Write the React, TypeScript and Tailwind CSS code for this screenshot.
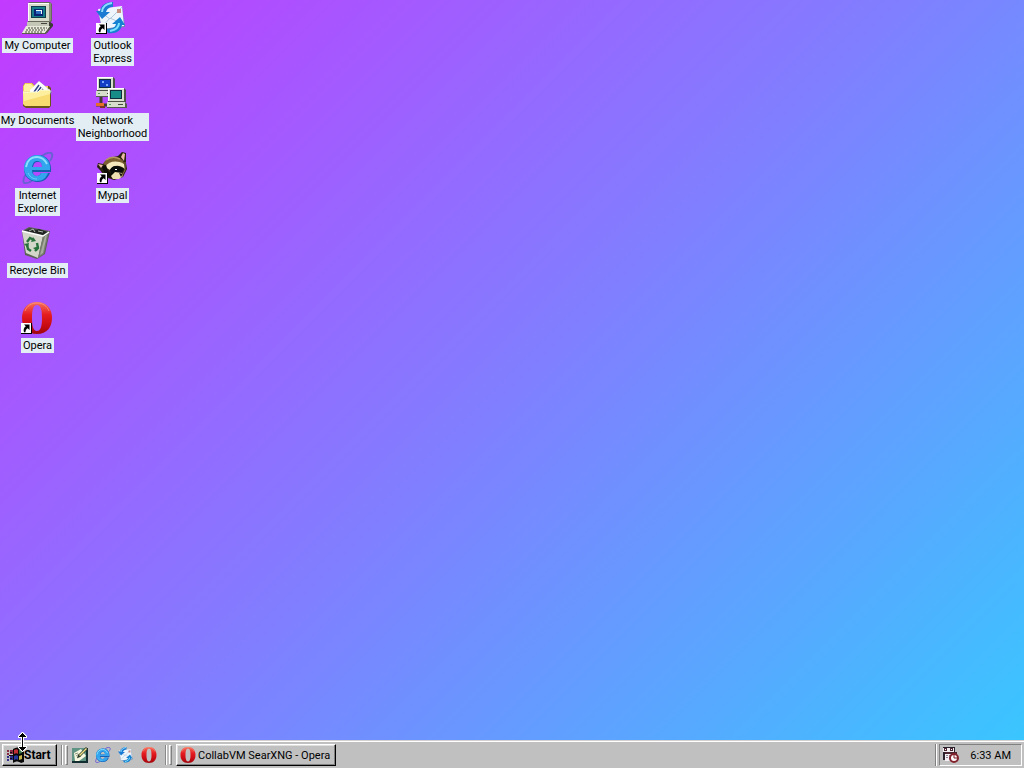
import type { ReactNode } from "react";

function ShortcutArrow() {
  return (
    <g>
      <path d="M0 21h11v11H0z" fill="#000" />
      <path d="M0 21h10v10H0z" fill="#fff" />
      <path d="M3 22.500h5.500v5.500l-1.800-1.800c-1.700 1-2.200 2-2.200 4H3c-.9-2.800 0-4.700 1.800-6z" fill="#000" />
    </g>
  );
}

function Svg32({ children }: { children: ReactNode }) {
  return (
    <svg viewBox="0 0 32 32" className="size-8 shrink-0" aria-hidden="true">
      {children}
    </svg>
  );
}

function ComputerIcon() {
  return (
    <Svg32>
      <path d="M6 1 8 0h20l2 2v17l-3 3H8l-2-2z" fill="#68685c" />
      <path d="M6 1h21v18H6z" fill="#d9dccb" />
      <path d="M6 1h21v1H7v17H6z" fill="#fff" />
      <path d="M27 1h2v17l-2 2z" fill="#8a8b7d" />
      <path d="M9 4h15v12H9z" fill="#113b4a" />
      <path d="M10 5h13v10H10z" fill="#187d8b" />
      <path d="M12 7h9v7h-9z" fill="#0b1f73" />
      <path d="M14 8h6v4h-6z" fill="#eef7fa" />
      <path d="M14 9h5v3h-5z" fill="#2668bd" />
      <path d="M5 20h23l3 2v2l-6 7h-5l6-8H5z" fill="#3c3c34" />
      <path d="M5 20h22v4H5z" fill="#c4c6b6" />
      <path d="M19 21h6v1h-6z" fill="#44443c" />
      <path d="M4 24h24l-5 7H0z" fill="#e9ead9" />
      <path d="M0 31h23l5-6v2l-4 5H0z" fill="#5c5c50" />
      <path d="M6 26h19M4 28h19M3 30h18" stroke="#46463e" strokeDasharray="2 1" fill="none" />
    </Svg32>
  );
}

function FolderIcon() {
  return (
    <Svg32>
      <path d="m1 9 2-3h7l3 3h14l2 2v18l-2 2H4l-3-2z" fill="#6b5518" />
      <path d="m1 9 2-3h7l3 3h13v8H1z" fill="#f0c95a" />
      <path d="m2 9 1-2h6l2 2v5H2z" fill="#fff2a0" />
      <path d="M8 14 17 4l13 11-4 6H8z" fill="#6c6f86" />
      <path d="M8 13 17 4l12 10-4 6H8z" fill="#fbfcff" />
      <path d="m12 15 5-7m-2 8 4-6m-1 7 3-5m0 6 2-4" stroke="#314486" strokeWidth="1.500" />
      <path d="m25 11 5 4-3 1z" fill="#b9bdcc" />
      <path d="M1 15h15l2-2h10v16H3l-2-2z" fill="#f8dc72" />
      <path d="M1 15h15l2-2h10v4L2 24z" fill="#fff6ad" opacity=".75" />
      <path d="M1 15h15l2-2h10" fill="none" stroke="#fffde0" />
    </Svg32>
  );
}

function ExplorerMark() {
  return (
    <g>
      <path d="M4 22c-4 6-3 10 0 9 2 0 4-1 7-3M20 4c5-4 9-4 10-2s0 4-2 7" fill="none" stroke="#6b5fd6" strokeWidth="2" />
      <path
        fillRule="evenodd"
        d="M16 3C8 3 2 9 2 17s6 13 14 13c6 0 10-4 12-9h-9c-1 2-2 3-4 3-3 0-4-2-4-4h18c1-10-4-17-13-17zm-5 12c1-4 2-5 5-5s4 1 4 5z"
        fill="#165fb4"
      />
      <path
        fillRule="evenodd"
        d="M15 3C8 3 2 9 2 16s5 13 13 13c6 0 9-3 11-8h-7c-1 3-3 3-5 3-3-1-4-3-4-6h18c1-8-4-15-13-15zm-5 12c1-4 2-6 5-6s5 2 5 6z"
        fill="#32a5ee"
      />
      <path d="M4 15c1-6 5-10 11-10 5 0 8 3 10 7" fill="none" stroke="#8be0ff" strokeWidth="2" />
      <path d="M6 21c2 4 5 6 9 6" fill="none" stroke="#6ad2fa" />
    </g>
  );
}

function RecycleIcon() {
  return (
    <Svg32>
      <path d="m1 4 7-4 21 4-5 23-8 5-12-4z" fill="#5d6156" />
      <path d="m2 4 7-3 19 4-6 5z" fill="#3f4543" />
      <path d="m5 4 6-2 2 2 5-2 8 3-4 3z" fill="#202522" />
      <path d="m8 4 4-2 2 3m3-1 5 1" fill="none" stroke="#b4bbb1" />
      <path d="m1 4 21 5-5 22-12-5z" fill="#d3d6c9" />
      <path d="m22 9 6-4-5 22-6 4z" fill="#777d6e" />
      <path d="m24 9 2-1-4 18-3 2z" fill="#a8ad9f" />
      <path d="m1 4 21 5 6-4" fill="none" stroke="#fff" strokeWidth="1.500" />
      <path d="m6 15 3-4 4 2m3 3 1 5-3 3m-4 0-3-2-1-4" fill="none" stroke="#28713c" strokeWidth="2.400" />
      <path d="m12 10 3 4-5 1zm6 9-2 5-4-3zM3 17l5-1-1 5z" fill="#28713c" />
    </Svg32>
  );
}

function OperaMark() {
  return (
    <g>
      <defs>
        <linearGradient id="opera-red" x2="0" y2="1">
          <stop stopColor="#f7725d" />
          <stop offset=".4" stopColor="#e51c20" />
          <stop offset=".75" stopColor="#c70a12" />
          <stop offset="1" stopColor="#9d080e" />
        </linearGradient>
      </defs>
      <path
        fillRule="evenodd"
        d="M16 0C6 0 1 7 1 16s5 16 15 16 15-7 15-16S26 0 16 0zm0 3c4 0 5 6 5 13s-1 13-5 13-5-6-5-13 1-13 5-13z"
        fill="url(#opera-red)"
      />
      <path d="M4 9C6 4 10 1 16 1s10 3 12 8" fill="none" stroke="#ff9e83" opacity=".7" />
    </g>
  );
}

function MailMark() {
  return (
    <g>
      <path d="m2 8 24-3 3 20-23 3z" fill="#6788ad" />
      <path d="m2 7 24-3 2 20-22 3z" fill="#eef5fc" />
      <path d="m6 25 8-9 13 6M3 9l11 8L26 5" fill="none" stroke="#b3c7dc" />
      <path d="M21 7h4v4h-4z" fill="#c98e7d" />
      <path d="M17 0C10 0 5 3 4 9H0l6 8 8-7h-4c1-3 3-5 7-5z" fill="#1b7bd2" />
      <path d="M16 1C10 2 6 5 6 10" fill="none" stroke="#8fdcff" strokeWidth="2" />
      <path d="m24 15 5 8h-3c-1 6-6 9-14 8l-2-4c6 0 9-1 10-5h-4z" fill="#1681d0" />
      <path d="M23 21c0 5-4 7-9 8" fill="none" stroke="#7be0ff" strokeWidth="2" />
    </g>
  );
}

function TinyComputer({ screen }: { screen: string }) {
  return (
    <g>
      <path d="M0 0h16l2 2v12H0z" fill="#4c5047" />
      <path d="M0 0h16v13H0z" fill="#d9dfce" />
      <path d="M0 0h16v1H1v12H0z" fill="#fff" />
      <path d="M2 2h12v9H2z" fill="#102d3d" />
      <path d="M3 3h10v7H3z" fill={screen} />
      <path d="M-1 14h18l2 2v4H-1z" fill="#555b4f" />
      <path d="M-1 14h18v5H-1z" fill="#d8decc" />
      <path d="M10 16h5v1h-5z" fill="#454b41" />
      <path d="M1 16h2v1H1z" fill="#54a05d" />
    </g>
  );
}

function NetworkIcon() {
  return (
    <Svg32>
      <g transform="translate(1 0)"><TinyComputer screen="#123dc5" /></g>
      <path d="M6 4h2v2H6zm4 3h2v2h-2z" fill="#78a6ff" />
      <path d="M5 20v7m-5 1h12" stroke="#433b32" strokeWidth="3" />
      <path d="M0 26h8v3H0z" fill="#e66e2a" />
      <path d="M4 29h5v2H4z" fill="#7d3926" />
      <g transform="translate(12 11)"><TinyComputer screen="#168d87" /></g>
    </Svg32>
  );
}

function RaccoonIcon() {
  return (
    <Svg32>
      <path d="m21 4 4-4 4 1v10l1 6-4 8-9 3-9-3-5-7-3-3 1-4 5 1 6-6z" fill="#2a2110" />
      <path d="m24 5 2-4 2 1-1 7zM1 12l5 1-2 3z" fill="#ecb9a2" />
      <path d="M6 12c3-6 9-8 16-6 3 1 5 3 5 6-5-3-11-2-16 2z" fill="#7a5f31" />
      <path d="M9 8c5-4 10-3 14-1" fill="none" stroke="#b4975b" strokeWidth="1.500" />
      <path d="M8 15c4-6 12-7 19-3l1 5c-6-5-12-4-15 1z" fill="#f6e8bd" />
      <path d="M13 18c2-5 8-5 14-1l-3 4-6-1-3 4z" fill="#090c08" />
      <path d="m5 15 4-2 2 6 5 4-3 3-5-4z" fill="#0f0d06" />
      <path d="m14 24 4-4 7 1 1 3-4 3h-6z" fill="#f0dfb0" />
      <path d="m22 21 4 1-2 3z" fill="#17100a" />
      <path d="M18 17h2v1h-2z" fill="#fff" />
      <path d="M28 10v8l-3 6" fill="none" stroke="#8d7440" />
      <ShortcutArrow />
    </Svg32>
  );
}

function DesktopShortcut({ label, children }: { label: ReactNode; children: ReactNode }) {
  return (
    <li className="flex h-[75px] justify-center pt-0.5">
      <button type="button" className="flex flex-col items-center gap-1 self-start">
        {children}
        <span className="bg-[#e3edf4] px-0.5 py-px text-center whitespace-nowrap">{label}</span>
      </button>
    </li>
  );
}

function DesktopPointer() {
  return (
    <svg viewBox="0 0 9 20" className="pointer-events-none absolute bottom-4 left-[18px] h-5 w-[9px]" aria-hidden="true">
      <path d="M4 0h1l4 4v2H6v8h3v2l-4 4H4l-4-4v-2h3V6H0V4z" fill="#fff" />
      <path d="M4 1h1v1h1v1h1v1h1v1H5v10h3v1H7v1H6v1H5v1H4v-1H3v-1H2v-1H1v-1h3V5H1V4h1V3h1V2h1z" fill="#000" />
    </svg>
  );
}

function WindowsFlag() {
  return (
    <svg viewBox="0 0 18 16" className="h-4 w-[18px] shrink-0" aria-hidden="true">
      <path d="M7 2c3-2 6-2 8 0l3-1v14l-3 1c-3-2-5-2-8 0z" fill="#090909" />
      <path d="M8 3c2-1 3-1 4 0v4c-1-1-2-1-4 0z" fill="#c12e35" />
      <path d="m13 3 3-1v4l-3 1z" fill="#397945" />
      <path d="M8 9c2-1 3-1 4 0v4c-1-1-2-1-4 0z" fill="#25389f" />
      <path d="m13 9 3-1v4l-3 1z" fill="#c7b448" />
      <path d="M4 3h3v4H4zM1 3h2v2H1zm0 3h2v2H1z" fill="#8b2b42" />
      <path d="M4 9h3v4H4zM1 9h2v2H1zm0 3h2v2H1z" fill="#302e89" />
      <path d="M4 5h2v1H4zm0 6h2v1H4zM3 8h4v1H3z" fill="#120d18" />
    </svg>
  );
}

function Grip() {
  return (
    <div className="flex h-5 gap-0.5" aria-hidden="true">
      <span className="w-0.5 border-l border-[#898989] bg-white" />
      <span className="w-[3px] border border-t-white border-r-[#808080] border-b-[#808080] border-l-white bg-[#c3c3c3]" />
    </div>
  );
}

const raised =
  "border border-t-white border-r-black border-b-black border-l-white shadow-[inset_-1px_-1px_0_#808080,inset_1px_1px_0_#dfdfdf]";

function LaunchButton({ label, children }: { label: string; children: ReactNode }) {
  return (
    <button type="button" aria-label={label} className="size-4">
      {children}
    </button>
  );
}

export default function App() {
  return (
    <div className="relative flex min-h-screen flex-col overflow-hidden bg-[#c0c0c0] font-[Roboto,'Liberation_Sans',sans-serif] text-[11px] leading-[13px] text-black">
      <main className="flex flex-1 items-start bg-[linear-gradient(135deg,#c23aff_0%,#7f80ff_52%,#3ac6ff_100%)]">
        <ul className="w-[75px]">
          <DesktopShortcut label="My Computer"><ComputerIcon /></DesktopShortcut>
          <DesktopShortcut label="My Documents"><FolderIcon /></DesktopShortcut>
          <DesktopShortcut label={<>Internet<br />Explorer</>}>
            <Svg32><ExplorerMark /></Svg32>
          </DesktopShortcut>
          <DesktopShortcut label="Recycle Bin"><RecycleIcon /></DesktopShortcut>
          <DesktopShortcut label="Opera">
            <Svg32><OperaMark /><ShortcutArrow /></Svg32>
          </DesktopShortcut>
        </ul>
        <ul className="w-[75px]">
          <DesktopShortcut label={<>Outlook<br />Express</>}>
            <Svg32><MailMark /><ShortcutArrow /></Svg32>
          </DesktopShortcut>
          <DesktopShortcut label={<>Network<br />Neighborhood</>}><NetworkIcon /></DesktopShortcut>
          <DesktopShortcut label="Mypal"><RaccoonIcon /></DesktopShortcut>
        </ul>
      </main>

      <footer className="flex h-7 items-center border-t border-[#d4d0d0] px-0.5 pt-px shadow-[inset_0_1px_0_white]">
        <button type="button" className={`flex h-[22px] w-[55px] items-center bg-[#c0c0c0] pl-[3px] text-xs font-bold ${raised}`}>
          <WindowsFlag />
          <span>Start</span>
        </button>
        <div className="ml-1"><Grip /></div>
        <nav aria-label="Quick launch" className="ml-1 flex gap-[7px]">
          <LaunchButton label="Show desktop">
            <svg viewBox="0 0 16 16" className="size-4" aria-hidden="true">
              <path d="M0 1h16v15H0z" fill="#122e30" />
              <path d="M0 1h14v13H0z" fill="#5f9384" />
              <path d="m2 6 7-4 5 7-7 5H3z" fill="#f6f8df" />
              <path d="m3 7 3-1m-2 3 3-2m-2 4 4-2" stroke="#8a987f" />
              <path d="m5 11 1-3 8-8 2 2-8 8z" fill="#2b3a2a" />
              <path d="m7 8 7-7 1 1-7 7z" fill="#f1e28b" />
            </svg>
          </LaunchButton>
          <LaunchButton label="Internet Explorer">
            <svg viewBox="0 0 32 32" className="size-4" aria-hidden="true"><ExplorerMark /></svg>
          </LaunchButton>
          <LaunchButton label="Outlook Express">
            <svg viewBox="0 0 32 32" className="size-4" aria-hidden="true"><MailMark /></svg>
          </LaunchButton>
          <LaunchButton label="Opera">
            <svg viewBox="0 0 32 32" className="size-4" aria-hidden="true"><OperaMark /></svg>
          </LaunchButton>
        </nav>
        <div className="ml-2"><Grip /></div>
        <button type="button" className={`ml-1 flex h-[22px] w-40 items-center gap-0.5 bg-[#c0c0c0] pl-[3px] whitespace-nowrap ${raised}`}>
          <svg viewBox="0 0 32 32" className="size-4 shrink-0" aria-hidden="true"><OperaMark /></svg>
          <span>CollabVM SearXNG - Opera</span>
        </button>
        <div className="ml-auto flex items-center gap-0.5">
          <span className="h-[22px] w-0.5 border-l border-[#808080] bg-white" aria-hidden="true" />
          <div className="flex h-[22px] items-center gap-[11px] border border-t-[#808080] border-r-white border-b-white border-l-[#808080] pr-2.5 pl-[3px]">
            <svg viewBox="0 0 16 16" className="size-4" role="img" aria-label="Task Scheduler">
              <path d="M0 0h12v13H0z" fill="#29212b" />
              <path d="M0 1h11v4H0zM2 6h11v8H2z" fill="#f4eff3" />
              <path d="M1 1h3v3H1zm6 0h3v3H7zM2 5h12v2H2z" fill="#4b2630" />
              <path d="M2 2h1v1H2zm6 0h1v1H8z" fill="#fff" />
              <path d="M3 8h2v1H3zm3 0h2v1H6zM3 10h2v1H3z" fill="#8c8390" />
              <circle cx="11" cy="11" r="4" fill="#fff" stroke="#82232e" strokeWidth="2" />
              <path d="M11 8v3h3" fill="none" stroke="#7d1824" />
            </svg>
            <time dateTime="06:33">6:33 AM</time>
          </div>
        </div>
      </footer>
      <DesktopPointer />
    </div>
  );
}
